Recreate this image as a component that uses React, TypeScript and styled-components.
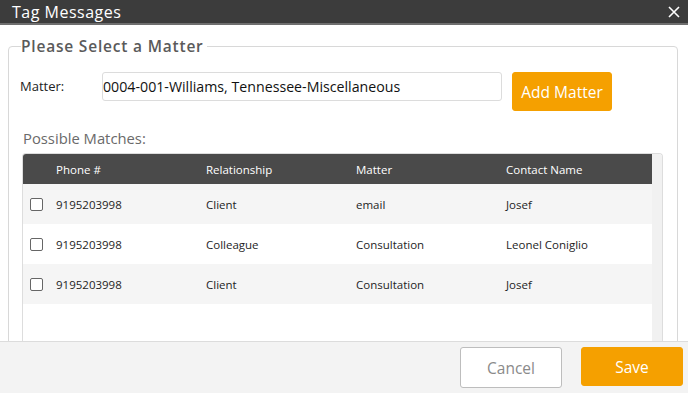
import styled, { createGlobalStyle } from 'styled-components';

const GlobalStyle = createGlobalStyle`
  html, body {
    margin: 0;
    padding: 0;
    background: #ffffff;
  }
  body {
    font-family: 'Open Sans', 'Noto Sans', sans-serif;
  }
`;

const Dialog = styled.div`
  width: 688px;
  height: 393px;
  display: flex;
  flex-direction: column;
  overflow: hidden;
  background: #ffffff;
`;

const TitleBar = styled.div`
  height: 23px;
  flex: 0 0 auto;
  display: flex;
  align-items: center;
  justify-content: space-between;
  padding: 0 6px 0 12px;
  background: #3c3c3c;
  border-bottom: 2px solid #6e6e6e;
  color: #ffffff;
  font-size: 16px;
  letter-spacing: 0.5px;
`;

const CloseButton = styled.button`
  display: flex;
  align-items: center;
  justify-content: center;
  width: 16px;
  height: 16px;
  padding: 0;
  border: none;
  background: transparent;
  cursor: pointer;
`;

const Body = styled.div`
  flex: 1 1 auto;
  overflow: hidden;
  padding: 11px 10px 0 8px;
`;

const Fieldset = styled.fieldset`
  margin: 0;
  height: 400px;
  border: 1px solid #d8d8d8;
  border-radius: 4px;
  padding: 16px 14px 0 11px;
`;

const Legend = styled.legend`
  padding: 0 3px 0 0;
  margin-left: 1px;
  color: #5a5a5a;
  font-size: 15.5px;
  font-weight: 600;
  letter-spacing: 0.8px;
  line-height: 20px;
`;

const MatterRow = styled.div`
  display: flex;
  align-items: flex-start;
  gap: 10px;
`;

const Label = styled.label`
  width: 72px;
  padding-top: 5px;
  font-size: 13px;
  color: #222222;
`;

const MatterInput = styled.input`
  box-sizing: border-box;
  width: 400px;
  height: 29px;
  padding: 0;
  border: 1px solid #dcdcdc;
  border-radius: 3px;
  font-family: 'Open Sans', 'Noto Sans', sans-serif;
  font-size: 14.2px;
  color: #111111;
  outline: none;
`;

const Button = styled.button<{ $primary?: boolean }>`
  box-sizing: border-box;
  height: ${({ $primary }) => ($primary ? '39px' : '41px')};
  padding: 0 8px;
  border-radius: 3px;
  border: 1px solid ${({ $primary }) => ($primary ? '#f5a000' : '#bdbdbd')};
  background: ${({ $primary }) => ($primary ? '#f5a000' : '#ffffff')};
  color: ${({ $primary }) => ($primary ? '#ffffff' : '#8a8a8a')};
  font-family: 'Open Sans', 'Noto Sans', sans-serif;
  font-size: 15.5px;
  cursor: pointer;
`;

const AddButton = styled(Button)`
  width: 100px;
`;

const MatchesLabel = styled.div`
  margin: 17px 0 5px 3px;
  font-size: 14.8px;
  color: #6a6a6a;
`;

const Grid = styled.div`
  margin-left: 2px;
  display: flex;
  border: 1px solid #dddddd;
  border-bottom: none;
  border-radius: 4px 4px 0 0;
  height: 220px;
  overflow: hidden;
`;

const GridMain = styled.div`
  flex: 1;
`;

const ScrollTrack = styled.div`
  width: 10px;
  background: #f1f1f1;
`;

const Row = styled.div<{ $kind: 'head' | 'odd' | 'even' }>`
  display: grid;
  grid-template-columns: 33px 150px 150px 150px 1fr;
  align-items: center;
  height: ${({ $kind }) => ($kind === 'head' ? '30px' : '40px')};
  background: ${({ $kind }) =>
    $kind === 'head' ? '#4a4a4a' : $kind === 'odd' ? '#f5f5f5' : '#ffffff'};
  color: ${({ $kind }) => ($kind === 'head' ? '#ffffff' : '#1e1e1e')};
  font-size: 11.5px;
`;

const CheckCell = styled.div`
  display: flex;
  justify-content: flex-start;
  padding-left: 7px;
`;

const Check = styled.input`
  appearance: none;
  margin: 0;
  width: 13px;
  height: 13px;
  border: 1px solid #666666;
  border-radius: 2px;
  background: #ffffff;
`;

const Footer = styled.div`
  flex: 0 0 auto;
  height: 52px;
  box-sizing: border-box;
  display: flex;
  justify-content: flex-end;
  align-items: flex-start;
  gap: 19px;
  padding: 5px 5px 0 0;
  background: #f3f3f3;
  border-top: 1px solid #dcdcdc;
`;

const FooterButton = styled(Button)`
  width: 102px;
`;

const rows = [
  { phone: '9195203998', relationship: 'Client', matter: 'email', contact: 'Josef' },
  { phone: '9195203998', relationship: 'Colleague', matter: 'Consultation', contact: 'Leonel Coniglio' },
  { phone: '9195203998', relationship: 'Client', matter: 'Consultation', contact: 'Josef' },
];

export default function App() {
  return (
    <>
      <GlobalStyle />
      <Dialog>
        <TitleBar>
          <span>Tag Messages</span>
          <CloseButton aria-label="Close">
            <svg width="12" height="12" viewBox="0 0 12 12">
              <path d="M1 1 L11 11 M11 1 L1 11" stroke="#ffffff" strokeWidth="1.6" />
            </svg>
          </CloseButton>
        </TitleBar>

        <Body>
          <Fieldset>
            <Legend>Please Select a Matter</Legend>
            <MatterRow>
              <Label>Matter:</Label>
              <MatterInput defaultValue="0004-001-Williams, Tennessee-Miscellaneous" />
              <AddButton $primary>Add Matter</AddButton>
            </MatterRow>

            <MatchesLabel>Possible Matches:</MatchesLabel>
            <Grid>
              <GridMain>
                <Row $kind="head">
                  <span />
                  <span>Phone #</span>
                  <span>Relationship</span>
                  <span>Matter</span>
                  <span>Contact Name</span>
                </Row>
                {rows.map((r, i) => (
                  <Row key={i} $kind={i % 2 === 0 ? 'odd' : 'even'}>
                    <CheckCell>
                      <Check type="checkbox" />
                    </CheckCell>
                    <span>{r.phone}</span>
                    <span>{r.relationship}</span>
                    <span>{r.matter}</span>
                    <span>{r.contact}</span>
                  </Row>
                ))}
              </GridMain>
              <ScrollTrack />
            </Grid>
          </Fieldset>
        </Body>

        <Footer>
          <FooterButton>Cancel</FooterButton>
          <FooterButton $primary>Save</FooterButton>
        </Footer>
      </Dialog>
    </>
  );
}
